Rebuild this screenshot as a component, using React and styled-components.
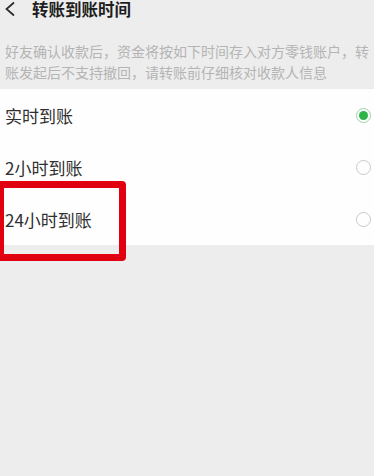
import React from "react";
import styled, { createGlobalStyle } from "styled-components";

const Global = createGlobalStyle`
  html, body { margin: 0; padding: 0; background: #ededed; }
  body { font-family: "Noto Sans CJK SC", "Noto Sans", sans-serif; overflow: hidden; }
`;

const Page = styled.div`
  width: 374px;
  height: 476px;
  background: #ededed;
  overflow: hidden;
`;

const Header = styled.div`
  height: 18px;
  display: flex;
  align-items: center;
  padding-left: 4px;
`;

const Back = styled.svg`
  width: 12px;
  height: 16px;
  flex: none;
`;

const Title = styled.div`
  margin-left: 16px;
  font-size: 16.5px;
  line-height: 18px;
  font-weight: 600;
  color: #1e1e1e;
`;

const Desc = styled.div`
  margin-top: 23px;
  padding: 0 6px 0 5px;
  font-size: 14px;
  line-height: 21px;
  color: #b4b4b4;
`;

const DescLine = styled.span`
  display: block;
  white-space: nowrap;
  text-align: ${(p) => (p.$full ? "justify" : "left")};
  text-align-last: ${(p) => (p.$full ? "justify" : "auto")};
`;

const Panel = styled.div`
  margin-top: 6px;
  background: #fefefe;
`;

const Row = styled.div`
  position: relative;
  height: 52px;
  display: flex;
  align-items: center;
  justify-content: space-between;
  padding: 0 3px 0 5px;
`;

const Label = styled.span`
  font-size: 17px;
  color: #303030;
`;

const Radio = styled.span`
  width: 15px;
  height: 15px;
  box-sizing: border-box;
  border-radius: 50%;
  border: 1.5px solid ${(p) => (p.$on ? "#9fd2a3" : "#c9c9c9")};
  display: flex;
  align-items: center;
  justify-content: center;
  &::after {
    content: "";
    width: 9px;
    height: 9px;
    border-radius: 50%;
    background: ${(p) => (p.$on ? "#2db446" : "transparent")};
  }
`;

const Mark = styled.div`
  position: absolute;
  left: -3px;
  top: -12px;
  width: 129px;
  height: 80px;
  box-sizing: border-box;
  border: 7px solid #e0000f;
  border-radius: 4px;
  pointer-events: none;
`;

const options = [
  { label: "实时到账", on: true },
  { label: "2小时到账", on: false },
  { label: "24小时到账", on: false, mark: true },
];

export default function App() {
  return (
    <Page>
      <Global />
      <Header>
        <Back viewBox="0 0 12 16">
          <polyline points="10,1.5 2.5,8 10,14.5" fill="none" stroke="#2a2a2a" strokeWidth="1.7" />
        </Back>
        <Title>转账到账时间</Title>
      </Header>
      <Desc>
        <DescLine $full>好友确认收款后，资金将按如下时间存入对方零钱账户，转</DescLine>
        <DescLine>账发起后不支持撤回，请转账前仔细核对收款人信息</DescLine>
      </Desc>
      <Panel>
        {options.map((o) => (
          <Row key={o.label}>
            <Label>{o.label}</Label>
            <Radio $on={o.on} />
            {o.mark && <Mark />}
          </Row>
        ))}
      </Panel>
    </Page>
  );
}
